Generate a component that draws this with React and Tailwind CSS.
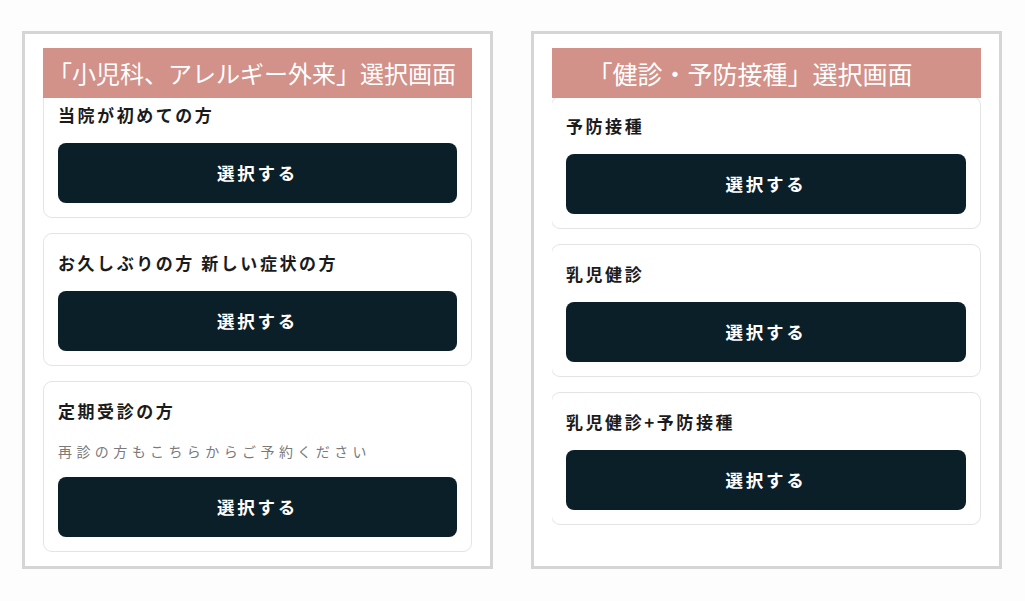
import React from 'react';

const jp = { fontFamily: '"Noto Sans CJK JP", "Noto Sans", sans-serif' };

const SelectButton = () => (
  <button className="w-full h-[60px] rounded-[8px] bg-[#0b1f29] text-white text-[17.5px] font-bold tracking-[0.16em] flex items-center justify-center">
    選択する
  </button>
);

const MenuCard = ({ title, note, wide }) => (
  <div className={`bg-white border border-[#e4e4e4] rounded-[9px] p-[14px] flex flex-col ${wide ? '-ml-[1px]' : ''}`}>
    <div className="h-[30px] flex items-center text-[17px] font-bold tracking-[0.15em] text-[#1b1b1b]">{title}</div>
    {note && (
      <div className="mt-[14px] h-[22px] flex items-center text-[14px] tracking-[0.315em] text-[#7a7a7a]">{note}</div>
    )}
    <div className={note ? 'mt-[15px]' : 'mt-[13px]'}>
      <SelectButton />
    </div>
  </div>
);

const Frame = ({ heading, headingClass, offset, wide, items }) => (
  <div className="w-[471px] h-[538px] border-[3px] border-[#d5d5d5] bg-white px-[18px] pt-[14px] flex flex-col overflow-hidden">
    <div className={`h-[50px] shrink-0 bg-[#d29189] text-white leading-none flex items-center relative z-10 ${headingClass}`}>
      {heading}
    </div>
    <div className="flex-1 overflow-hidden">
      <div className={`flex flex-col gap-[15px] ${offset}`}>
        {items.map((item) => (
          <MenuCard key={item.title} title={item.title} note={item.note} wide={wide} />
        ))}
      </div>
    </div>
  </div>
);

export default function App() {
  return (
    <div className="min-h-[601px] w-[1025px] bg-[#fdfdfd] pl-[22px] pt-[31px] flex gap-[38px]" style={jp}>
      <Frame
        heading="「小児科、アレルギー外来」選択画面"
        headingClass="pl-[5px] text-[24px]"
        offset="-mt-[13px]"
        items={[
          { title: '当院が初めての方' },
          { title: 'お久しぶりの方 新しい症状の方' },
          { title: '定期受診の方', note: '再診の方もこちらからご予約ください' },
        ]}
      />
      <Frame
        heading="「健診・予防接種」選択画面"
        headingClass="justify-center pr-[33px] text-[25px]"
        offset="-mt-[2px]"
        wide
        items={[
          { title: '予防接種' },
          { title: '乳児健診' },
          { title: '乳児健診+予防接種' },
        ]}
      />
    </div>
  );
}
